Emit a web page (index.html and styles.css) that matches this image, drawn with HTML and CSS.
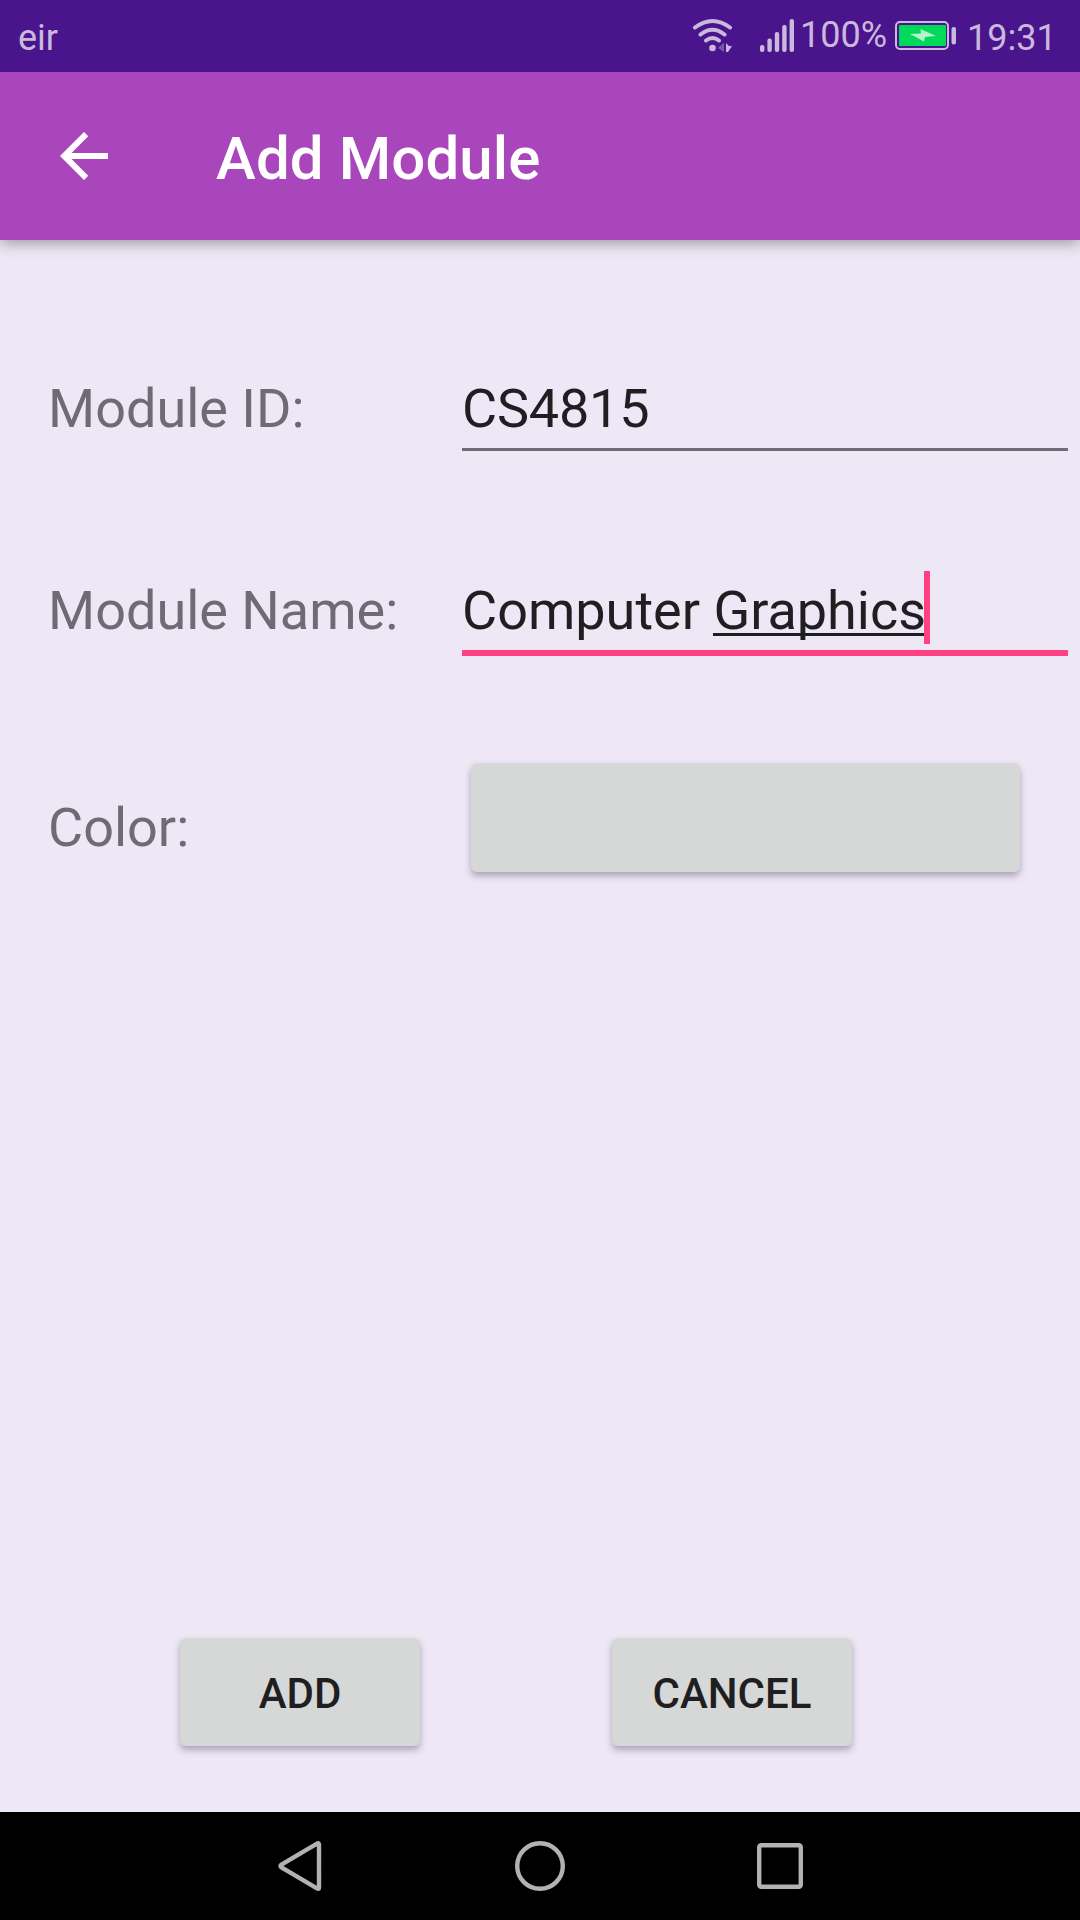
FILE: index.html
```html
<!DOCTYPE html>
<html lang="en">
<head>
<meta charset="utf-8">
<title>Add Module</title>
<link rel="stylesheet" href="styles.css">
</head>
<body>
<div class="screen">
  <header class="status">
    <span class="carrier">eir</span>
    <svg class="wifi" width="42" height="40" viewBox="0 0 42 40" fill="none" stroke="currentColor" stroke-width="4" stroke-linecap="round">
      <path d="M3 11.500Q20.500 -1.500 38 11.500M8.500 18.500Q20.500 9 32.500 18.500M14 24.500Q20.500 19.500 27 24.500"/>
      <circle cx="20.500" cy="32" r="3.300" fill="currentColor" stroke="none"/>
      <path d="M32 26.500V36L26 32Z" fill="currentColor" stroke="none" opacity=".4"/>
      <path d="M34 27L37 30L40 30L36 36H34Z" fill="currentColor" stroke="none"/>
    </svg>
    <svg class="signal" width="36" height="34" viewBox="0 0 36 34" fill="currentColor">
      <rect x="1" y="26" width="4.400" height="7" rx="2"/>
      <rect x="8.400" y="19.500" width="4.400" height="13.500" rx="2"/>
      <rect x="15.800" y="13" width="4.400" height="20" rx="2"/>
      <rect x="23.200" y="6" width="4.400" height="27" rx="2"/>
      <rect x="30.600" y="0" width="4.400" height="33" rx="2"/>
    </svg>
    <span class="percent">100%</span>
    <svg class="battery" width="62" height="30" viewBox="0 0 62 30">
      <rect x="1" y="1" width="52" height="27" rx="4" fill="none" stroke="currentColor" stroke-width="2"/>
      <rect x="4" y="4" width="47" height="21" rx="1" fill="#00d95a"/>
      <path d="M15 13L26 12.500L25.500 8L41 15L30 16L29 20.500Z" fill="#b5f3cd"/>
      <rect x="56.500" y="6" width="4.500" height="17.500" rx="2" fill="currentColor"/>
    </svg>
    <span class="clock">19:31</span>
  </header>
  <div class="appbar">
    <svg class="back" width="72" height="72" viewBox="0 0 24 24" fill="#fff"><path d="M20 11H7.830l5.590-5.590L12 4l-8 8 8 8 1.410-1.410L7.830 13H20v-2z"/></svg>
    <h1 class="title">Add Module</h1>
  </div>
  <main class="form">
    <div class="row row-id">
      <span class="label">Module ID:</span>
      <div class="field code">CS4815</div>
    </div>
    <div class="row row-name">
      <span class="label">Module Name:</span>
      <div class="field focused">Computer&nbsp;<span class="composing">Graphics</span><i class="caret"></i></div>
    </div>
    <div class="row row-color">
      <span class="label">Color:</span>
      <button class="btn swatch" aria-label="Color"></button>
    </div>
    <div class="actions">
      <button class="btn">ADD</button>
      <button class="btn">CANCEL</button>
    </div>
  </main>
  <nav class="navbar">
    <svg width="52" height="54" viewBox="0 0 52 54"><path d="M44 5.500V48.500Q44 50.500 42 49.300L6.500 28.500Q4.500 27 6.500 25.500L42 4.700Q44 3.500 44 5.500Z"/></svg>
    <svg width="54" height="54" viewBox="0 0 54 54"><circle cx="27" cy="27" r="22.800"/></svg>
    <svg width="54" height="54" viewBox="0 0 54 54"><rect x="6.200" y="6.200" width="41.600" height="41.600" rx="2"/></svg>
  </nav>
</div>
</body>
</html>
```
FILE: styles.css
```css
body {
  margin: 0;
  font-family: Roboto, sans-serif;
}

.screen {
  display: flex;
  flex-direction: column;
  width: 1080px;
  height: 1920px;
  background: #eee8f6;
  overflow: hidden;
}

.status {
  display: flex;
  z-index: 1;
  flex: none;
  align-items: flex-start;
  box-sizing: border-box;
  height: 72px;
  padding-left: 18px;
  background: #4a148c;
  color: #c9b9dd;
  font-size: 36px;
  line-height: 40px;
}

.carrier {
  width: 674px;
  margin-top: 18px;
}

.wifi {
  margin-top: 16px;
}

.signal {
  margin: 19px 0 0 25px;
}

.percent {
  width: 95px;
  margin: 15px 0 0 5px;
}

.percent,
.clock {
  white-space: nowrap;
}

.battery {
  margin-top: 21px;
}

.clock {
  margin: 18px 0 0 10px;
}

.appbar {
  display: flex;
  flex: none;
  align-items: center;
  height: 168px;
  padding-left: 48px;
  background: #aa46bb;
  box-shadow: 0 3px 14px rgba(0, 0, 0, 0.36);
}

.title {
  margin: 5px 0 0 96px;
  color: #fff;
  font-size: 60px;
  font-weight: 500;
  letter-spacing: 0.1px;
  line-height: 70px;
}

.form {
  display: flex;
  flex: 1;
  flex-direction: column;
  padding: 137px 12px 0 48px;
}

.row {
  display: flex;
  flex: none;
  align-items: flex-start;
  font-size: 54px;
  line-height: 63px;
}

.row-id {
  height: 202px;
}

.row-name {
  height: 184px;
}

.label {
  width: 414px;
  color: #6f6b74;
}

.field {
  display: flex;
  flex: 1;
  padding-bottom: 8px;
  border-bottom: 3px solid #6f6b74;
  color: #1f1e20;
}

.field.code {
  letter-spacing: -0.2px;
}

.field.focused {
  border-bottom: 6px solid #ff4081;
}

.composing {
  height: 54px;
  border-bottom: 3px solid #1f1e20;
}

.caret {
  width: 6px;
  height: 73px;
  margin: -8px 0 -9px -2px;
  background: #ff4081;
}

.btn {
  width: 240px;
  height: 108px;
  padding: 3px 0 0;
  border: 0;
  border-radius: 6px;
  background: #d6d8d7;
  box-shadow: 0 4px 7px rgba(40, 30, 60, 0.34);
  color: #1f1e20;
  font: 500 42px/50px Roboto, sans-serif;
}

.row-color .label {
  padding-top: 33px;
}

.swatch {
  width: 549px;
  height: 109px;
  margin-left: 9px;
}

.actions {
  display: flex;
  gap: 192px;
  margin: auto 0 66px 132px;
}

.navbar {
  display: flex;
  flex: none;
  align-items: center;
  justify-content: center;
  gap: 186px;
  height: 108px;
  padding-left: 2px;
  background: #000;
}

.navbar svg {
  fill: none;
  stroke: #b2b2b2;
  stroke-width: 4.4;
}
```
